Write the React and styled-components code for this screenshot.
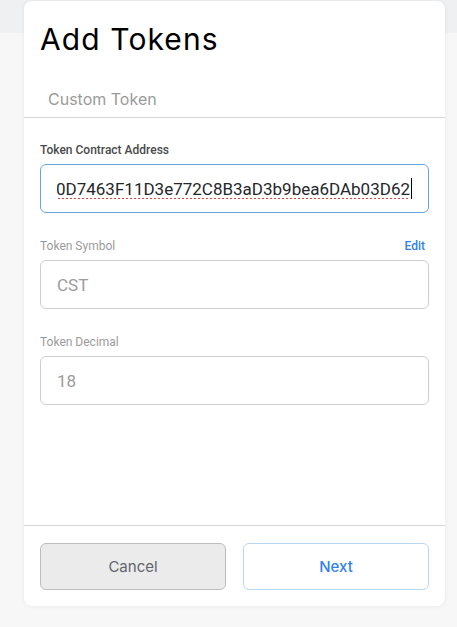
import React from 'react';
import styled, { createGlobalStyle } from 'styled-components';

const GlobalStyle = createGlobalStyle`
  html, body {
    margin: 0;
    padding: 0;
  }
  body {
    min-height: 627px;
    background: linear-gradient(to bottom, #eef0f2 0, #eef0f2 33px, #f7f7f7 33px, #f7f7f7 100%);
    font-family: Roboto, "Liberation Sans", sans-serif;
  }
`;

const Page = styled.div`
  padding: 1px 12px 0 24px;
`;

const Card = styled.div`
  width: 421px;
  height: 605px;
  background: #fff;
  border-radius: 8px;
  box-shadow: 0 0 4px rgba(0, 0, 0, 0.07);
  display: flex;
  flex-direction: column;
  overflow: hidden;
`;

const Header = styled.div`
  padding: 18px 16px 0;
`;

const Title = styled.h1`
  margin: 0;
  font-family: Inter, "Liberation Sans", sans-serif;
  font-weight: 400;
  font-size: 30px;
  line-height: 40px;
  letter-spacing: 1.1px;
  color: #000;
`;

const Tabs = styled.div`
  display: flex;
  margin-top: 30px;
  border-bottom: 1px solid #d6d6d6;
`;

const Tab = styled.div`
  padding: 0 0 8px 24px;
  font-family: Inter, "Liberation Sans", sans-serif;
  font-size: 16px;
  line-height: 20px;
  color: #9b9b9b;
`;

const Body = styled.div`
  flex: 1;
  padding: 22px 16px 0;
  display: flex;
  flex-direction: column;
  gap: 23px;
`;

const Field = styled.div`
  display: flex;
  flex-direction: column;
`;

const LabelRow = styled.div`
  display: flex;
  justify-content: space-between;
  align-items: flex-end;
  height: 18px;
  margin-bottom: 6px;
`;

const Label = styled.span`
  font-size: 12px;
  line-height: 16px;
  font-weight: ${p => (p.$strong ? 500 : 400)};
  color: ${p => (p.$strong ? '#4a4a4a' : '#9b9b9b')};
`;

const EditLink = styled.span`
  font-size: 12px;
  line-height: 16px;
  font-weight: 500;
  color: #2f80ed;
  margin-right: 4px;
`;

const Box = styled.div`
  box-sizing: border-box;
  height: 49px;
  border: 1px solid ${p => (p.$focused ? '#6aa4de' : '#cdcdcd')};
  border-radius: 6px;
  padding: 0 16px;
  display: flex;
  align-items: center;
  overflow: hidden;
`;

const Value = styled.div`
  flex: 1;
  display: flex;
  justify-content: ${p => (p.$scrolled ? 'flex-end' : 'flex-start')};
  align-items: center;
  overflow: hidden;
  white-space: nowrap;
  font-size: 17px;
  color: ${p => (p.$muted ? '#9b9b9b' : '#24272a')};
`;

const Misspelled = styled.span`
  flex-shrink: 0;
  text-decoration: underline dotted #e0433a;
  text-decoration-thickness: 2px;
  text-underline-offset: 4px;
`;

const Caret = styled.span`
  flex-shrink: 0;
  width: 1px;
  height: 21px;
  margin-left: 1px;
  background: #000;
`;

const Footer = styled.div`
  border-top: 1px solid #d6d6d6;
  padding: 17px 16px 16px;
  display: flex;
  gap: 17px;
`;

const Button = styled.button`
  flex: 1;
  height: 47px;
  box-sizing: border-box;
  border-radius: 6px;
  font-family: Inter, "Liberation Sans", sans-serif;
  font-size: 15px;
  cursor: pointer;
  background: ${p => (p.$primary ? '#fff' : '#ebebeb')};
  border: 1px solid ${p => (p.$primary ? '#b8d7f4' : '#bdbdbd')};
  color: ${p => (p.$primary ? '#2f80ed' : '#5f656c')};
  font-weight: ${p => (p.$primary ? 500 : 400)};
`;

const App = () => (
  <>
    <GlobalStyle />
    <Page>
      <Card>
        <Header>
          <Title>Add Tokens</Title>
        </Header>
        <Tabs>
          <Tab>Custom Token</Tab>
        </Tabs>
        <Body>
          <Field>
            <LabelRow>
              <Label $strong>Token Contract Address</Label>
            </LabelRow>
            <Box $focused>
              <Value $scrolled>
                <Misspelled>0x6E0D7463F11D3e772C8B3aD3b9bea6DAb03D62</Misspelled>
                <Caret />
              </Value>
            </Box>
          </Field>
          <Field>
            <LabelRow>
              <Label>Token Symbol</Label>
              <EditLink>Edit</EditLink>
            </LabelRow>
            <Box>
              <Value $muted>CST</Value>
            </Box>
          </Field>
          <Field>
            <LabelRow>
              <Label>Token Decimal</Label>
            </LabelRow>
            <Box>
              <Value $muted>18</Value>
            </Box>
          </Field>
        </Body>
        <Footer>
          <Button>Cancel</Button>
          <Button $primary>Next</Button>
        </Footer>
      </Card>
    </Page>
  </>
);

export default App;
